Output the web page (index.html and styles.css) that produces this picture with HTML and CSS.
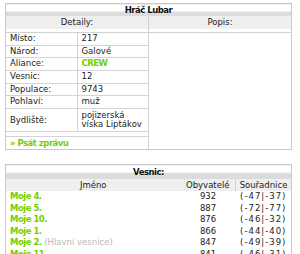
FILE: index.html
```html
<!DOCTYPE html>
<html lang="cs">
<head>
<meta charset="utf-8">
<title>Hráč Lubar</title>
<link rel="stylesheet" href="styles.css">
</head>
<body>
<table class="box profile">
  <colgroup><col class="half"><col class="half"></colgroup>
  <tr class="title"><td colspan="2">Hráč Lubar</td></tr>
  <tr class="head"><td>Detaily:</td><td class="sep">Popis:</td></tr>
  <tr class="content">
    <td class="details-cell">
      <table class="details">
        <colgroup><col class="lbl"><col></colgroup>
        <tr><td>Místo:</td><td class="val">217</td></tr>
        <tr><td>Národ:</td><td class="val">Galové</td></tr>
        <tr><td>Aliance:</td><td class="val"><span class="link">CREW</span></td></tr>
        <tr><td>Vesnic:</td><td class="val">12</td></tr>
        <tr><td>Populace:</td><td class="val">9743</td></tr>
        <tr><td>Pohlaví:</td><td class="val">muž</td></tr>
        <tr class="two"><td>Bydliště:</td><td class="val">pojizerská víska Liptákov</td></tr>
        <tr class="empty"><td colspan="2"></td></tr>
        <tr class="msg"><td colspan="2"><span class="link">» Psát zprávu</span></td></tr>
      </table>
    </td>
    <td class="sep desc"></td>
  </tr>
</table>

<table class="box villages">
  <colgroup><col class="c-name"><col class="c-pop"><col class="c-coord"></colgroup>
  <tr class="title"><td colspan="3">Vesnic:</td></tr>
  <tr class="head"><td>Jméno</td><td>Obyvatelé</td><td class="sep">Souřadnice</td></tr>
  <tr><td class="name"><span class="link">Moje 4.</span></td><td class="num">932</td><td class="num coord">(-47|-37)</td></tr>
  <tr><td class="name"><span class="link">Moje 5.</span></td><td class="num">887</td><td class="num coord">(-72|-77)</td></tr>
  <tr><td class="name"><span class="link">Moje 10.</span></td><td class="num">876</td><td class="num coord">(-46|-32)</td></tr>
  <tr><td class="name"><span class="link">Moje 1.</span></td><td class="num">866</td><td class="num coord">(-44|-40)</td></tr>
  <tr><td class="name"><span class="link">Moje 2.</span> <span class="main">(Hlavní vesnice)</span></td><td class="num">847</td><td class="num coord">(-49|-39)</td></tr>
  <tr><td class="name"><span class="link">Moje 11.</span></td><td class="num">841</td><td class="num coord">(-46|-31)</td></tr>
</table>
</body>
</html>
```

FILE: styles.css
```css
html, body {
  margin: 0;
  background: #fff;
}
body {
  padding: 3px 0 0 5px;
  font-family: "DejaVu Sans", Verdana, sans-serif;
  font-size: 8.5px;
  color: #222;
}
table {
  border-collapse: collapse;
  table-layout: fixed;
}
td {
  padding: 0;
}
.box {
  width: 287px;
  border: 1px solid #c8c8c8;
}
.half {
  width: 143px;
}
.title td {
  height: 12px;
  line-height: 12px;
  text-align: center;
  font-weight: bold;
  letter-spacing: -0.5px;
  color: #111;
  background: linear-gradient(to bottom, #fff 0, #fff 55%, #dcdcdc 60%, #dcdcdc 100%);
}
.head td {
  text-align: center;
  vertical-align: top;
  line-height: 13px;
}
.profile .head td {
  height: 16px;
  background: linear-gradient(to bottom, #efefef 0, #efefef 13px, #fff 13px);
}
.sep {
  border-left: 1px solid #d0d0d0;
}
.content > td {
  border-top: 1px solid #d0d0d0;
  vertical-align: top;
}
.details {
  width: 100%;
}
.lbl {
  width: 71px;
}
.details td {
  padding: 1px 4px;
  line-height: 9.67px;
  border-bottom: 1px solid #d4d4d4;
}
.details .val {
  border-left: 1px solid #d4d4d4;
}
.details .two td {
  line-height: 9px;
  padding: 2px 4px;
}
.details .empty td {
  height: 4px;
  padding: 0;
}
.details .msg td {
  border-bottom: 0;
  line-height: 10px;
}
.link {
  color: #71d000;
  font-weight: bold;
  letter-spacing: -0.5px;
}
.villages {
  margin-top: 14px;
}
.villages .title td {
  height: 14px;
  background: linear-gradient(to bottom, #fff 0, #fff 50%, #dcdcdc 55%, #dcdcdc 100%);
}
.villages .head td {
  height: 12px;
  line-height: 12px;
  background: #efefef;
}
.c-name {
  width: 175px;
}
.c-pop {
  width: 55px;
}
.villages td.name {
  padding-left: 4px;
  height: 11.6px;
  line-height: 11.6px;
}
.villages td.num {
  text-align: center;
  line-height: 11.6px;
}
.villages td.coord {
  letter-spacing: 1px;
}
.main {
  color: #b8b8b8;
}
```
